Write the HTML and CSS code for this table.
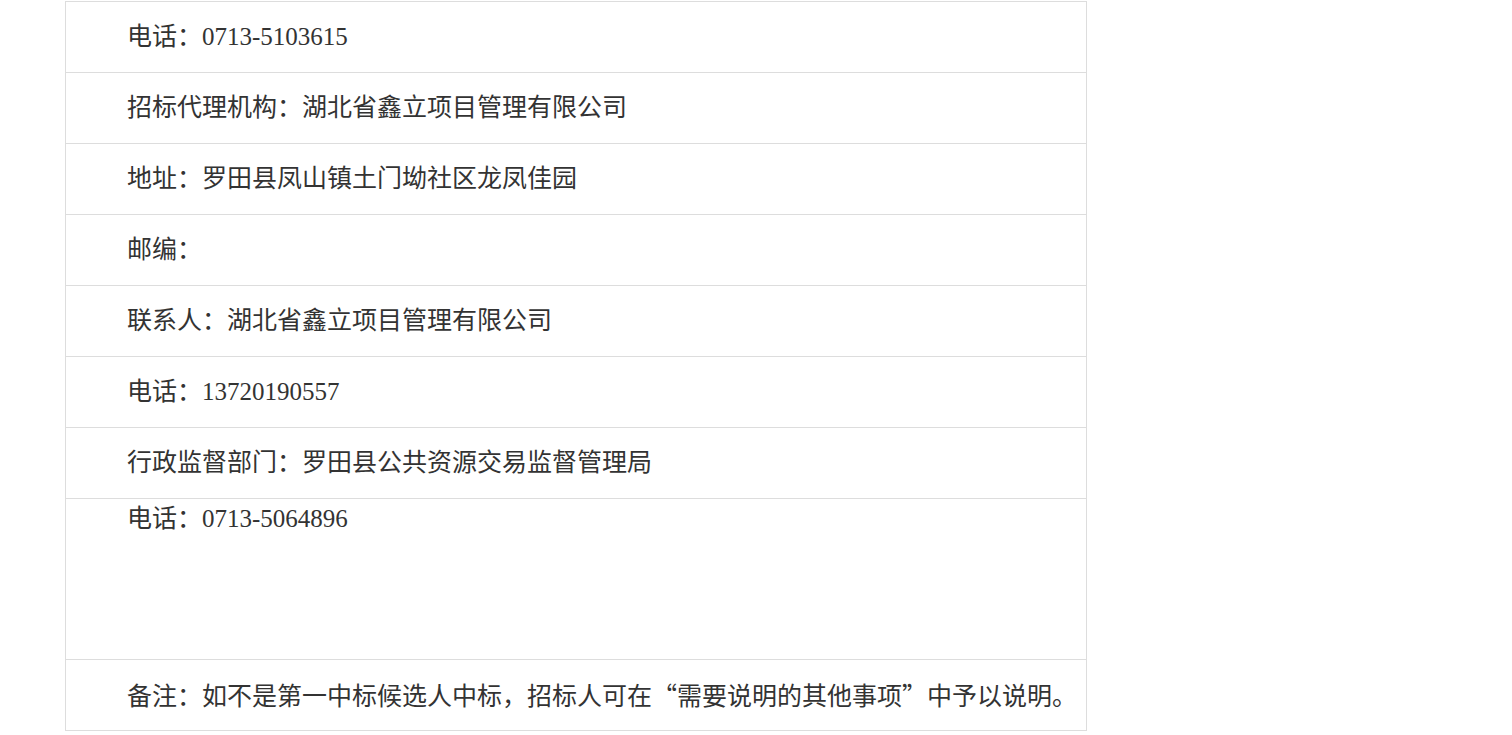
FILE: index.html
```html
<!DOCTYPE html>
<html lang="zh-CN">
<head>
    <meta charset="UTF-8">
    <meta name="viewport" content="width=device-width, initial-scale=1.0">
    <title>中标候选人公示</title>
    <link rel="stylesheet" href="styles.css">
</head>
<body>
    <div class="page">
        <table class="info">
            <tr><td>电话：0713-5103615</td></tr>
            <tr><td>招标代理机构：湖北省鑫立项目管理有限公司</td></tr>
            <tr><td>地址：罗田县凤山镇土门坳社区龙凤佳园</td></tr>
            <tr><td>邮编：</td></tr>
            <tr><td>联系人：湖北省鑫立项目管理有限公司</td></tr>
            <tr><td>电话：13720190557</td></tr>
            <tr><td>行政监督部门：罗田县公共资源交易监督管理局</td></tr>
            <tr><td class="tall">电话：0713-5064896</td></tr>
            <tr><td>备注：如不是第一中标候选人中标，招标人可在<span class="q">“</span>需要说明的其他事项<span class="q">”</span>中予以说明。</td></tr>
        </table>
    </div>
</body>
</html>
```

FILE: styles.css
```css
html {
    font-size: 25px;
}
body {
    margin: 0;
    background: #fff;
    color: #333;
    font-family: "Liberation Serif", "Noto Sans CJK SC", serif;
}
.page {
    padding: 1px 0 0 65px;
}
.info {
    width: 1022px;
    border-collapse: collapse;
    border: 1px solid #ddd;
}
.info td {
    height: 70px;
    padding: 0 0 0 61px;
    border-top: 1px solid #ddd;
    line-height: 32px;
    vertical-align: middle;
}
/* 多行备用的高单元格，文字靠上 */
.info td.tall {
    height: 156px;
    padding-top: 4px;
    vertical-align: top;
}
.q {
    display: inline-block;
    width: 1em;
    text-align: center;
    font-family: "Noto Sans CJK SC", sans-serif;
}
```
